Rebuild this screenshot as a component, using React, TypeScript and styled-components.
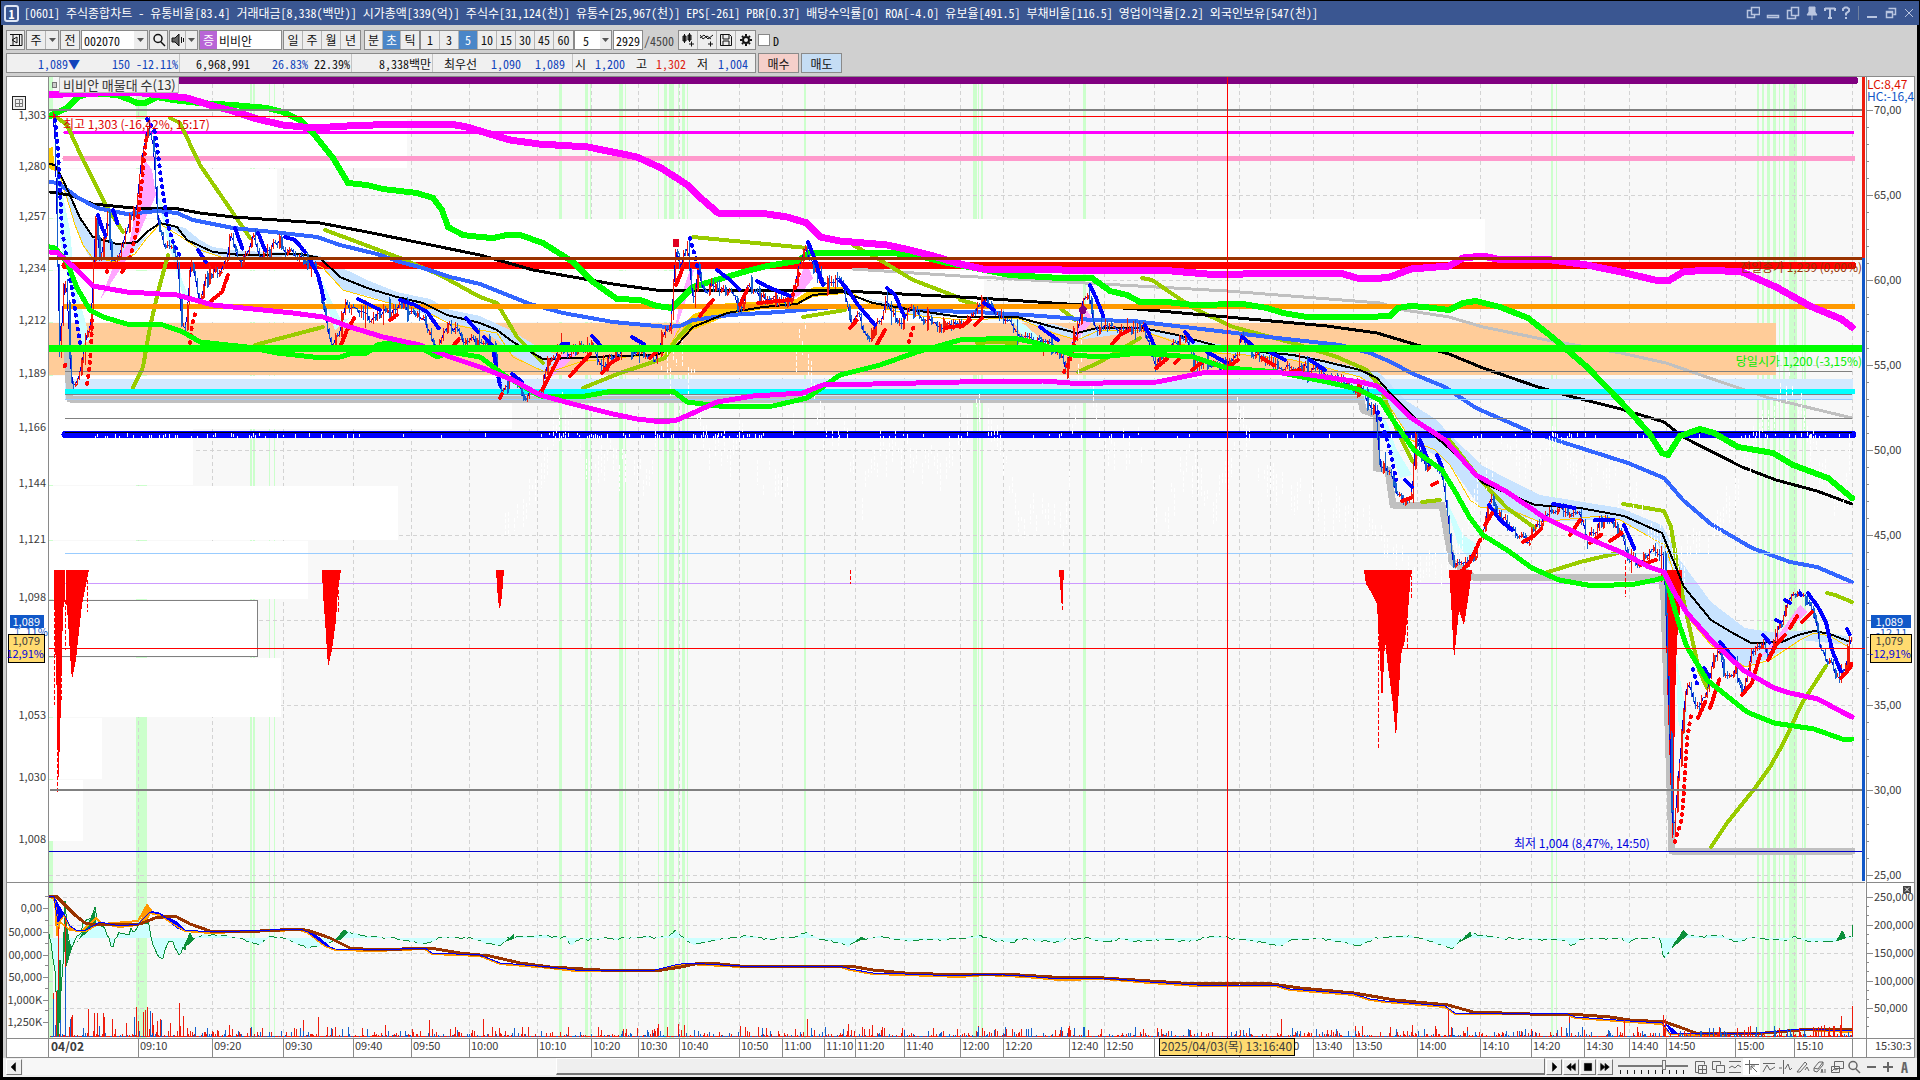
import React from 'react';
import styled, { createGlobalStyle } from 'styled-components';

const UI_FONT = '"Noto Sans Mono CJK KR", "Noto Sans CJK KR", "Liberation Mono", monospace';
const CHART_FONT = '"Noto Sans CJK KR", sans-serif';

const Global = createGlobalStyle`
  * { box-sizing: border-box; }
  html, body { margin: 0; padding: 0; }
  body { background: #000; font-family: ${UI_FONT}; font-size: 12px; color: #111; }
  button, input, select { font: inherit; color: inherit; margin: 0; border-radius: 0; }
`;

/* ---------- window frame ---------- */

const Window = styled.div`
  display: flex;
  flex-direction: column;
  height: 100vh;
  min-height: 600px;
  padding: 1px 1px 3px;
  background: #000;
  overflow: hidden;
`;
const TitleBar = styled.header`
  display: flex;
  align-items: center;
  height: 24px;
  flex: none;
  padding: 0 2px 0 3px;
  gap: 5px;
  background: #3a5691;
  color: #fff;
`;
const TitleBadge = styled.span`
  width: 15px;
  height: 17px;
  border: 2px solid #dfe6f5;
  border-radius: 3px;
  line-height: 13px;
  text-align: center;
  font-weight: bold;
`;
const Title = styled.h1`
  flex: 1;
  min-width: 0;
  margin: 0;
  font-size: 12px;
  font-weight: 400;
  line-height: 22px;
  white-space: pre;
  overflow: hidden;
`;
const TitleTools = styled.div`
  display: flex;
  align-items: center;
`;
const TitleButton = styled.button<{ $w?: number }>`
  width: ${(p) => p.$w ?? 19}px;
  height: 20px;
  padding: 0;
  border: 0;
  background: none;
  color: #b9c5e0;
  display: flex;
  align-items: center;
  justify-content: center;
`;
const TitleRule = styled.span`
  width: 1px;
  height: 14px;
  margin: 0 3px 0 4px;
  background: #71829f;
`;
const Body = styled.main`
  flex: 1;
  min-height: 0;
  display: flex;
  flex-direction: column;
  margin: 0 2px;
  background: #d0d0d0;
`;

/* ---------- toolbars ---------- */

const Toolbar = styled.div`
  display: flex;
  align-items: center;
  flex: none;
  height: 28px;
  padding: 5px 3px 3px;
`;
const Group = styled.div<{ $gap?: number }>`
  display: flex;
  height: 20px;
  margin-right: ${(p) => p.$gap ?? 1}px;
  border: 1px solid #8a8a8a;
  background: #ededed;
`;
const Tool = styled.button<{ $on?: boolean; $w?: number }>`
  width: ${(p) => p.$w ?? 19}px;
  height: 18px;
  padding: 0;
  border: 0;
  border-right: 1px solid #b4b4b4;
  background: ${(p) => (p.$on ? '#4a86c8' : '#ededed')};
  color: ${(p) => (p.$on ? '#fff' : '#111')};
  display: flex;
  align-items: center;
  justify-content: center;
  line-height: 18px;
  &:last-child { border-right: 0; }
`;
const Field = styled.input<{ $w: number }>`
  width: ${(p) => p.$w}px;
  height: 18px;
  padding: 0 2px;
  border: 0;
  background: #fff;
  outline: none;
`;
const Pick = styled.select<{ $w: number }>`
  width: ${(p) => p.$w}px;
  height: 18px;
  padding: 0 0 0 8px;
  border: 0;
  background: #fff;
  appearance: none;
  outline: none;
`;
const Badge = styled.span`
  width: 17px;
  height: 18px;
  line-height: 17px;
  text-align: center;
  color: #fff;
  background: #b865d6;
`;
const Total = styled.span`
  width: 34px;
  color: #444;
`;
const Check = styled.label`
  display: flex;
  align-items: center;
  gap: 3px;
  margin-left: 1px;
  input {
    appearance: none;
    width: 12px;
    height: 12px;
    border: 1px solid #888;
    background: #fff;
  }
`;

const Quotes = styled.div`
  display: flex;
  flex: none;
  height: 23px;
  padding: 0 3px 3px;
  gap: 2px;
`;
const QuoteBox = styled.div`
  display: flex;
  width: 750px;
  border: 1px solid #8a8a8a;
  background: #f0f0f0;
`;
const Cell = styled.div<{ $w: number }>`
  display: flex;
  align-items: center;
  justify-content: flex-end;
  width: ${(p) => p.$w}px;
  padding: 0 1px;
  border-right: 1px solid #c4c4c4;
  white-space: pre;
  &:last-child { border-right: 0; }
`;
const Value = styled.span<{ $c?: string; $w?: number }>`
  width: ${(p) => (p.$w ? p.$w + 'px' : 'auto')};
  text-align: right;
  color: ${(p) => p.$c ?? '#111'};
`;
const Order = styled.button<{ $bg: string }>`
  width: 41px;
  height: 20px;
  padding: 0;
  border: 1px solid #8a8a8a;
  background: ${(p) => p.$bg};
`;

/* ---------- chart ---------- */

const ChartPanel = styled.section`
  flex: 1;
  min-height: 0;
  display: grid;
  grid-template-columns: 42px minmax(0, 1fr) 49px;
  grid-template-rows: minmax(0, 1fr) 19px;
  margin: 0 2px 0 3px;
  border: 1px solid #8a8a8a;
  background: #fff;
  position: relative;
`;
const Canvas = styled.svg`
  display: block;
  width: 100%;
  height: 100%;
  overflow: hidden;
  font-family: ${CHART_FONT};
  font-size: 12px;
`;
const AxisCanvas = styled(Canvas)`
  font-size: 11px;
`;
const PlotCell = styled.div`
  position: relative;
  min-width: 0;
  min-height: 0;
`;
const Legend = styled.div`
  position: absolute;
  top: 0;
  left: 3px;
  display: flex;
  align-items: center;
  gap: 2px;
  i {
    width: 5px;
    height: 6px;
    border: 1px solid #777;
    background: #ccc;
  }
  span {
    padding: 0 2px 0 3px;
    border: 1px solid #bbb;
    background: #f0f0f0;
    color: #333;
    line-height: 14px;
    white-space: pre;
    font-family: ${CHART_FONT};
    font-size: 13px;
  }
`;
const TimeAxis = styled.div`
  grid-column: 1 / -1;
  min-width: 0;
`;

/* ---------- bottom bar ---------- */

const Bottom = styled.footer`
  flex: none;
  display: flex;
  align-items: center;
  height: 19px;
  padding: 0 4px 2px 3px;
  background: #efefef;
`;
const Step = styled.button`
  width: 16px;
  height: 16px;
  margin-right: 1px;
  padding: 0;
  border: 1px solid #fff;
  border-right-color: #777;
  border-bottom-color: #777;
  background: #efefef;
  display: flex;
  align-items: center;
  justify-content: center;
`;
const Track = styled.div`
  flex: 1;
  display: flex;
  justify-content: flex-end;
  height: 17px;
  margin-right: 1px;
  background: #f7f7f7;
`;
const Thumb = styled.div`
  width: 65%;
  border: 1px solid #fff;
  border-right-color: #777;
  border-bottom: 2px solid #777;
  background: #efefef;
`;
const Zoom = styled.label`
  display: flex;
  flex-direction: column;
  width: 70px;
  margin: 0 4px;
  input {
    appearance: none;
    width: 70px;
    height: 10px;
    background: linear-gradient(#777, #777) 0 5px / 100% 2px no-repeat;
  }
  input::-webkit-slider-thumb {
    appearance: none;
    width: 4px;
    height: 10px;
    border: 1px solid #777;
    background: #efefef;
  }
`;
const Draw = styled.button<{ $on?: boolean }>`
  width: 17px;
  height: 17px;
  padding: 0;
  border: 0;
  background: ${(p) => (p.$on ? '#fff' : 'none')};
  color: #666;
  display: flex;
  align-items: center;
  justify-content: center;
  b { font-size: 14px; line-height: 16px; }
`;

/* ---------- data ---------- */

type Pt = [number, number];
const parse = (s: string): Pt[] =>
  s.trim().split(/\s+/).map((p) => p.split(',').map(Number) as unknown as Pt);

const rng = (seed: number) => () => {
  seed = (seed * 1664525 + 1013904223) % 4294967296;
  return seed / 4294967296;
};
const sample = (pts: Pt[], x: number) => {
  for (let i = 1; i < pts.length; i++) {
    if (x <= pts[i][0]) {
      const [x0, y0] = pts[i - 1];
      const [x1, y1] = pts[i];
      return y0 + ((y1 - y0) * (x - x0)) / Math.max(1, x1 - x0);
    }
  }
  return pts[pts.length - 1][1];
};

const UPPER_MAGENTA = '49,94 63,94 133,92 160,95 187,98 213,106 233,111 257,119 283,125 313,128 347,126 400,124 450,124 467,127 480,131 510,140 539,144 588,147 637,157 661,168 686,184 703,200 718,213 760,213 787,217 807,223 820,237 840,241 887,245 910,250 937,257 960,264 983,269 1040,269 1083,271 1110,270 1160,270 1207,274 1243,274 1280,273 1340,273 1357,278 1373,279 1390,277 1411,269 1449,266 1463,258 1483,256 1497,259 1518,259 1552,260 1587,265 1621,272 1655,280 1668,281 1683,272 1707,270 1742,272 1776,287 1810,306 1841,319 1852,327';
const UPPER_GREEN = '50,116 67,108 78,97 90,93 117,95 128,99 137,103 145,103 157,97 173,100 200,103 233,105 267,108 283,112 300,120 313,133 333,158 348,183 367,185 383,189 417,193 433,198 442,210 448,227 463,235 480,237 493,238 507,235 520,235 543,243 573,262 593,282 617,299 640,300 657,306 672,308 680,300 693,287 713,281 747,271 767,266 797,261 810,253 893,253 920,256 947,263 980,269 1010,275 1060,278 1092,278 1110,291 1127,295 1140,302 1167,302 1193,305 1243,304 1267,308 1283,313 1307,317 1367,317 1390,316 1398,308 1410,306 1425,307 1449,310 1463,303 1476,301 1500,307 1528,318 1552,337 1587,367 1621,402 1649,433 1662,453 1668,455 1680,436 1700,429 1714,433 1738,447 1773,453 1793,465 1828,478 1852,498';
const LONG_BLACK = '50,192 70,195 93,204 133,208 173,208 200,213 233,217 320,223 367,232 480,255 533,270 613,284 663,291 730,290 843,291 960,297 993,299 1067,304 1137,309 1227,317 1327,326 1377,333 1417,345 1449,354 1483,368 1538,387 1573,397 1621,409 1664,422 1683,437 1742,467 1776,480 1817,491 1852,504';
const MID_BLUE = '50,182 58,183 77,197 97,208 127,214 157,211 177,213 193,220 233,228 273,232 317,237 340,245 377,254 400,262 423,268 450,277 480,284 530,304 563,313 613,322 667,327 680,326 693,320 730,315 780,312 833,307 893,307 960,312 977,312 1027,315 1093,320 1133,321 1193,328 1260,336 1340,345 1370,353 1393,363 1411,373 1445,387 1476,408 1531,432 1587,450 1628,463 1664,478 1683,500 1711,524 1752,548 1790,562 1817,567 1852,582';
const SHORT_BLACK = '50,164 55,165 63,180 72,200 80,218 93,237 117,244 137,242 147,232 160,223 177,227 187,240 213,252 240,255 300,254 320,258 340,277 367,288 397,297 423,303 447,315 480,323 497,330 513,342 543,359 580,358 613,356 657,355 677,345 693,327 727,313 763,307 797,304 813,295 843,292 873,303 913,310 960,317 1017,317 1053,327 1077,333 1097,328 1143,328 1177,335 1217,346 1260,352 1293,355 1327,362 1360,370 1377,378 1390,393 1407,410 1430,432 1459,457 1483,483 1511,495 1535,505 1580,508 1624,516 1662,533 1673,560 1684,587 1711,620 1731,632 1751,643 1782,642 1798,635 1814,631 1830,634 1850,642';
const YELLOW = '58,170 66,195 75,225 83,245 92,257 115,262 135,254 147,238 160,224 180,236 200,250 230,260 300,257 323,268 343,290 367,297 400,306 423,310 450,324 480,330 497,333 513,357 547,373 580,362 613,358 665,354 680,328 693,317 727,304 763,303 797,299 813,288 843,287 873,306 913,315 960,320 1017,318 1053,333 1077,340 1100,330 1143,331 1177,343 1217,353 1260,356 1293,360 1327,368 1360,377 1377,388 1393,412 1411,440 1435,450 1450,465 1470,500 1480,507 1511,510 1540,522 1600,516 1620,520 1655,540 1665,545 1673,570 1690,620 1711,645 1745,667 1770,660 1800,640 1814,633 1830,636 1850,648';
const LOWER_MAGENTA = '50,252 57,252 77,270 93,286 127,292 177,295 213,305 243,308 293,313 323,317 350,327 383,337 420,345 450,357 480,367 513,380 540,395 573,404 613,414 637,419 663,422 677,420 693,413 717,402 753,396 803,393 823,385 873,384 960,382 1043,381 1070,383 1103,383 1157,382 1177,378 1207,372 1260,372 1303,374 1360,382 1377,386 1393,400 1410,417 1445,440 1476,475 1507,492 1545,518 1587,538 1621,552 1649,567 1664,572 1674,592 1687,613 1711,640 1743,670 1774,688 1790,693 1818,699 1842,712 1852,717';
const LOWER_GREEN = '50,247 55,248 67,262 77,288 90,310 103,317 127,324 163,325 183,332 200,342 247,347 277,353 313,357 340,357 353,353 367,353 377,345 387,343 420,347 437,357 450,352 480,357 507,377 540,396 580,397 613,391 673,391 687,402 727,407 773,406 807,398 840,375 880,365 917,352 960,340 1013,338 1037,343 1073,355 1100,357 1140,353 1193,357 1227,368 1277,372 1327,382 1357,389 1380,400 1393,420 1414,450 1442,470 1456,493 1470,518 1483,535 1507,550 1532,568 1559,580 1593,586 1635,584 1655,580 1666,577 1672,600 1680,627 1687,647 1707,680 1747,712 1774,723 1814,729 1842,739 1852,739';
const OLIVE = [
  '55,116 67,125 83,160 107,207 123,232', '170,118 180,123 200,165 233,213 250,238',
  '325,230 360,243 400,258 440,275 480,297 497,303 517,337 543,363', '133,388 143,367 150,327 158,292 168,255',
  '255,345 323,327', '583,388 620,373 665,358 676,340 690,325', '693,237 807,248', '803,317 845,310',
  '853,245 880,260 913,280 960,298', '1142,278 1152,280 1193,308 1233,327 1293,343 1337,357 1367,370 1380,387 1400,437 1413,462',
  '1422,502 1440,500', '1078,372 1100,362 1140,338', '1060,308 1075,320', '960,300 975,304', '977,343 993,342 1017,343',
  '1447,437 1483,483 1507,508 1535,528', '1545,573 1580,562 1618,553', '1623,504 1664,511 1671,527 1678,570 1684,603 1699,670 1707,688',
  '1711,847 1727,823 1755,788 1770,767 1784,742 1802,703 1826,666', '1827,593 1835,595 1852,602',
];
const LIGHT_GREY = '853,269 960,276 1227,291 1380,303 1404,310 1449,317 1483,327 1552,341 1621,353 1666,363 1724,383 1769,398 1852,418';
const STOP_GREY = '67,350 70,399 1361,399 1363,410 1376,415 1376,468 1388,470 1393,505 1442,505 1452,562 1473,577 1662,577 1664,600 1672,851 1852,851';

const PRICE = parse('53,117 56,180 58,340 60,365 62,290 66,280 70,385 74,387 80,365 85,340 90,330 92,290 95,215 100,265 107,215 110,260 120,255 130,215 136,210 140,160 148,125 152,135 157,220 162,240 170,250 177,258 181,330 186,325 190,260 198,300 205,280 215,272 225,265 230,235 240,262 253,238 262,258 278,240 290,255 305,262 315,270 322,300 330,343 338,335 345,305 355,310 370,317 390,312 402,305 415,315 425,325 437,345 450,325 465,340 480,345 492,350 502,395 512,375 522,395 540,393 546,365 558,350 570,352 585,345 592,345 600,370 610,360 625,349 655,357 662,335 670,330 675,250 680,265 687,243 690,290 694,310 697,270 703,290 715,285 725,290 740,308 747,285 760,300 790,302 797,270 805,250 812,265 820,283 843,283 850,325 857,315 867,337 880,320 885,300 900,325 912,310 925,322 945,328 960,325 970,315 984,303 1000,315 1015,330 1035,342 1058,350 1065,370 1075,335 1083,300 1087,290 1095,330 1110,325 1125,327 1143,328 1155,365 1170,345 1185,335 1193,365 1210,362 1227,367 1237,355 1240,338 1255,355 1275,365 1290,370 1310,367 1330,378 1345,382 1360,390 1368,405 1376,412 1378,465 1390,470 1396,500 1410,500 1415,440 1425,465 1440,465 1445,500 1452,560 1463,567 1475,555 1485,520 1490,500 1500,515 1510,530 1525,540 1535,530 1545,515 1560,510 1580,515 1587,540 1600,520 1620,530 1627,560 1640,560 1655,550 1663,560 1668,700 1672,848 1678,770 1684,700 1687,680 1695,710 1705,695 1712,660 1718,650 1724,680 1735,670 1742,690 1752,650 1760,640 1768,655 1775,635 1785,610 1795,595 1805,600 1812,610 1820,650 1830,665 1840,678 1848,650 1852,630');

const DOT_BLUE = [
  '55,120 58,150 62,230 72,290 80,343', '98,215 101,225 106,237', '113,210 118,225', '147,119 155,132 162,185 167,220 172,240 180,256',
  '198,250 206,262', '235,228 243,250', '258,233 265,250', '285,237 295,240 305,252', '310,260 318,275 324,300', '358,299 368,304 380,310',
  '400,300 415,305 427,312 440,330', '466,318 478,332', '484,337 492,345 500,385', '512,374 522,382', '562,344 570,344', '592,336 600,345',
  '632,337 645,345', '690,238 696,260 700,278', '717,270 730,280 740,290', '757,281 770,288 790,296', '808,242 815,260 823,285', '840,281 848,290 858,305 875,325',
  '887,288 895,295 905,318', '984,303 994,310', '1040,327 1058,340', '1090,285 1097,300 1104,318', '1145,325 1154,345', '1185,332 1193,342',
  '1207,352 1225,362', '1242,337 1252,345', '1270,352 1285,360', '1310,360 1325,370', '1378,412 1390,450 1396,480', '1405,480 1412,487', '1420,440 1430,465',
  '1437,455 1445,475', '1489,505 1500,520 1512,530', '1553,504 1575,508', '1595,520 1615,520', '1624,525 1635,550', '1693,669 1698,687', '1704,668 1710,678',
  '1720,642 1735,660', '1763,635 1770,643', '1776,620 1780,622', '1785,600 1790,603', '1800,593 1801,595', '1808,593 1818,607 1826,622 1832,650 1841,672', '1847,629 1850,635',
];
const DOT_RED = [
  '65,365 65,371', '92,320 91,350 88,380 86,388', '107,272 108,268', '122,272 127,265', '130,258 137,230 143,170 146,140', '190,343 192,325 196,310', '211,301 222,292 228,275',
  '341,345 347,330 355,317', '390,320 397,315', '447,353 460,338', '500,398 502,394', '542,390 550,375 560,355', '570,376 580,365 590,354', '602,373 612,362 620,358', '650,358 656,352', '676,285 682,270',
  '700,316 706,308 713,300', '740,305 747,290', '758,303 790,300', '793,295 800,270', '850,328 857,320', '877,344 885,330', '909,342 914,325', '945,328 958,326', '960,327 970,320', '975,325 982,318',
  '1064,372 1070,360 1076,335', '1112,344 1120,335 1130,330', '1156,368 1168,358', '1175,363 1180,358', '1192,370 1205,360', '1228,367 1238,360', '1262,358 1275,366', '1290,372 1300,370', '1402,501 1410,498', '1432,485 1438,482',
  '1458,575 1470,562 1480,540', '1485,525 1493,512', '1523,542 1535,535 1542,528', '1570,535 1580,520', '1590,543 1602,534', '1610,541 1622,533', '1640,565 1656,560',
  '1675,842 1682,818', '1682,815 1684,790 1687,740 1691,715', '1698,718 1706,700', '1710,708 1716,690 1720,678', '1742,695 1752,683 1760,655', '1768,660 1776,645 1785,635', '1790,628 1798,615', '1802,622 1812,612', '1841,678 1850,668 1852,662',
];

const BLOCKS: [number, number, number][] = [
  [119, 49, 407], [169, 49, 277], [219, 51, 1485], [271, 51, 984], [376, 53, 512], [429, 56, 193], [486, 54, 398], [541, 58, 308], [658, 59, 281], [718, 61, 102], [780, 61, 83],
];
const STRIPES: [number, number][] = [
  [49, 4], [136, 11], [250, 2], [253, 2], [269, 1], [274, 1], [559, 3], [585, 3], [590, 1], [619, 4], [625, 1], [658, 1], [664, 3], [669, 5], [678, 1], [682, 3], [687, 1], [804, 2],
  [973, 4], [978, 1], [981, 2], [1083, 3], [1551, 2], [1556, 1], [1757, 2], [1762, 2], [1767, 3], [1773, 3], [1779, 1], [1783, 2], [1789, 8], [1802, 1], [1804, 2],
];
const TICKS: [number, string][] = [
  [138, '09:10'], [212, '09:20'], [283, '09:30'], [353, '09:40'], [411, '09:50'], [469, '10:00'], [537, '10:10'], [591, '10:20'], [638, '10:30'], [679, '10:40'], [739, '10:50'], [782, '11:00'],
  [824, '11:10'], [855, '11:20'], [904, '11:40'], [960, '12:00'], [1003, '12:20'], [1069, '12:40'], [1104, '12:50'], [1154, ''], [1197, ''], [1239, ''], [1270, '13:30'], [1313, '13:40'], [1353, '13:50'],
  [1417, '14:00'], [1480, '14:10'], [1531, '14:20'], [1584, '14:30'], [1629, '14:40'], [1666, '14:50'], [1735, '15:00'], [1794, '15:10'], [1852, ''],
];
const LEVELS: [number, string, number, number, number][] = [
  [80, '#800080', 7, 65, 1855], [132, '#ff00ff', 3, 65, 1853], [158, '#ff99cc', 5, 65, 1853], [265, '#ff0000', 7, 65, 1853], [306, '#ff9900', 5, 65, 1853],
];
const SPIKES = [
  '54,570 65,570 65,600 63,610 60,740 58,790 57,700 55,640', '66,570 89,570 86,585 82,605 78,640 76,660 72,680 70,655 68,620 66,600', '322,570 341,570 338,590 336,620 332,650 328,667 325,620 323,595',
  '496,570 504,570 502,595 500,610 498,600', '1059,570 1064,570 1062,610', '1364,570 1411,570 1409,600 1405,640 1401,655 1396,738 1393,705 1388,667 1385,640 1382,704 1380,660 1377,604 1371,592 1366,584',
  '1449,570 1472,570 1468,600 1464,625 1459,610 1457,630 1454,660 1451,600', '1665,570 1682,570 1680,610 1677,640 1675,700 1673,850 1671,800 1667,680',
];

const BROWN = '49,896 56,896 65,905 75,915 85,923 95,925 140,924 155,918 170,916 177,917 190,924 210,931 240,932 300,929 310,931 330,938 350,948 375,950 430,948 460,953 490,956 520,963 550,967 600,970 655,971 681,967 695,964 710,963 740,966 850,966 873,970 905,973 960,975 1003,974 1052,977 1104,978 1150,981 1197,984 1240,983 1272,984 1300,988 1354,993 1395,1000 1448,1005 1473,1012 1530,1014 1570,1014 1610,1017 1630,1020 1665,1022 1685,1029 1698,1034 1765,1033 1800,1030 1830,1029 1852,1030';
const FAST = '49,896 54,897 58,922 64,914 70,926 76,930 86,930 100,922 120,926 138,924 150,912 160,914 172,922 185,930 210,932 300,929 308,932 325,945 335,949 375,950 425,948 432,953 480,955 500,963 550,967 575,970 655,970 675,965 688,963 740,966 840,966 850,969 873,973 905,974 960,976 985,974 1025,976 1060,979 1104,978 1150,982 1197,985 1275,985 1290,989 1354,994 1370,999 1385,1001 1445,1006 1455,1013 1495,1013 1568,1014 1575,1017 1630,1021 1662,1023 1670,1033 1700,1034 1760,1033 1800,1029 1852,1031';
const MOMENTUM = parse('49,936 52,950 55,970 58,1034 61,990 64,955 65,897 68,940 72,948 78,935 86,920 95,910 98,925 106,932 112,950 120,930 126,935 132,930 140,925 147,914 152,942 161,958 168,944 176,945 180,955 188,940 200,935 220,935 240,938 258,945 270,936 290,940 307,948 320,945 335,940 344,930 360,935 395,938 425,944 440,937 470,938 485,943 500,946 508,937 540,936 565,937 570,945 580,939 620,938 656,937 672,935 675,930 682,937 694,945 710,941 722,938 740,938 745,936 770,939 795,937 806,932 820,940 840,942 848,946 858,940 882,936 900,940 960,939 978,935 990,939 1012,942 1020,939 1060,942 1070,938 1090,938 1104,942 1120,939 1140,941 1160,939 1190,941 1215,936 1240,939 1282,946 1290,940 1320,938 1340,942 1360,946 1375,938 1410,936 1425,940 1445,945 1452,950 1462,938 1470,933 1500,938 1540,939 1568,940 1570,947 1580,939 1622,938 1626,943 1635,939 1660,938 1664,960 1670,950 1682,932 1690,936 1720,936 1738,942 1750,937 1770,939 1785,941 1793,936 1810,942 1820,941 1835,942 1840,936 1842,930 1846,938 1852,935');
const VOLUME_PEAKS: [number, number][] = [
  [53, 44], [56, 46], [58, 110], [65, 120], [72, 22], [88, 28], [112, 18], [126, 14], [136, 30], [147, 30], [152, 24], [160, 18], [179, 34], [229, 12], [303, 17], [318, 20], [335, 10], [385, 12], [429, 17], [483, 18], [568, 10],
  [637, 9], [658, 13], [667, 10], [678, 13], [684, 12], [740, 11], [795, 8], [807, 18], [848, 13], [862, 10], [872, 12], [902, 9], [978, 11], [1101, 8], [1190, 7], [1240, 7], [1281, 18], [1355, 11], [1362, 11], [1412, 12], [1448, 27], [1467, 10],
  [1569, 20], [1624, 17], [1663, 22], [1665, 18], [1841, 21], [1852, 31],
];
const WHITE_TRACE = parse('505,520 540,470 560,400 572,410 585,450 610,450 650,470 662,370 680,350 693,360 700,420 712,450 730,440 745,420 760,470 790,480 797,340 805,330 812,370 825,440 845,430 860,500 880,440 905,440 930,460 960,440 984,400 1000,440 1020,510 1050,500 1065,520 1080,340 1090,380 1100,440 1140,440 1160,510 1190,450 1210,500 1230,450 1240,395 1260,470 1290,480 1340,500 1370,520 1400,560 1450,560 1480,480 1495,450 1530,440 1560,440 1600,470 1640,500 1680,550 1710,530 1730,480 1760,420 1790,380 1810,430 1840,500 1852,440');

const buildBars = () => {
  const r = rng(7);
  const red: string[] = [];
  const blue: string[] = [];
  const trace: string[] = [];
  let last = 117;
  for (let x = 53; x <= 1852; x += 2) {
    const y = sample(PRICE, x) + (r() - 0.5) * 12;
    const tail = r() < 0.12 ? 12 : 3;
    const a = Math.round(Math.min(last, y) - r() * tail);
    const b = Math.round(Math.max(last, y) + r() * tail);
    (y < last ? red : blue).push(`M${x},${a}V${b}${r() < 0.4 ? `M${x + 1},${a + 2}V${b - 1}` : ''}`);
    trace.push(`${x},${Math.round((y + last) / 2)}`);
    last = y;
  }
  return { red: red.join(''), blue: blue.join(''), trace: trace.join(' ') };
};
const buildVolume = () => {
  const r = rng(31);
  const red: string[] = [];
  const blue: string[] = [];
  for (let x = 50; x < 1852; x += 1) {
    const busy = x < 190 ? 2.2 : x > 1660 ? 1 : 0.8;
    const h = Math.round(1 + Math.pow(r(), 6) * 12 * busy);
    (r() < 0.62 ? red : blue).push(`M${x},1037v${-h}`);
  }
  VOLUME_PEAKS.forEach(([x, h]) => red.push(`M${x},1037v${-h}`));
  return { red: red.join(''), blue: blue.join('') + 'M53,1037v-38M65,1037v-70M1569,1037v-14M1452,1037v-9' };
};
const buildWhite = () => {
  const r = rng(99);
  const out: string[] = [];
  for (let x = 505; x < 1850; x += 3) {
    if (r() < 0.25) continue;
    const y = sample(WHITE_TRACE, x) + (r() - 0.5) * 30;
    out.push(`M${x},${Math.round(y)}v${Math.round(6 + r() * 26)}`);
  }
  for (let x = 95; x < 1850; x += 2) {
    const near = (x < 300) || (x > 540 && x < 760) || (x > 1740) || (x > 1540 && x < 1580);
    if (r() < (near ? 0.35 : 0.06)) out.push(`M${x},${433 + Math.round(r() * 3)}v${2 + Math.round(r() * 4)}`);
  }
  return out.join('');
};
const buildJag = (from: number, to: number, amp: number) => {
  const r = rng(5 + from);
  const out: string[] = [];
  for (let x = from; x <= to; x += 2) out.push(`${x},${Math.round(sample(MOMENTUM, x) + (r() - 0.5) * amp)}`);
  return out.join(' ');
};
const BARS = buildBars();
const VOLUME = buildVolume();
const WHITE = buildWhite();
const JAG_OPEN = buildJag(49, 189, 8);
const JAG_REST = buildJag(189, 1852, 2);

/* stop markers stay apart where the trail is steep and merge where it is flat */
const markerDash = (d: string) => {
  const pts = parse(d);
  const [x0, y0] = pts[0];
  const [x1, y1] = pts[pts.length - 1];
  return Math.abs(y1 - y0) > 3 * Math.abs(x1 - x0) ? '1 6' : '2 2';
};

const Line = ({ d, c, w = 1, dash, cap = 'round' }: { d: string; c: string; w?: number; dash?: string; cap?: 'round' | 'butt' }) => (
  <polyline points={d} fill="none" stroke={c} strokeWidth={w} strokeDasharray={dash} strokeLinecap={cap} strokeLinejoin="round" />
);
const H = ({ y, c, w = 1, a = 65, b = 1852 }: { y: number; c: string; w?: number; a?: number; b?: number }) => (
  <line x1={a} x2={b} y1={y + (w % 2 ? 0.5 : 0)} y2={y + (w % 2 ? 0.5 : 0)} stroke={c} strokeWidth={w} />
);

const Plot = () => (
  <Canvas viewBox="49 77 1816 961" preserveAspectRatio="none" shapeRendering="crispEdges" role="img" aria-label="비비안 5초 차트">
    <rect x="49" y="77" width="1820" height="962" fill="#f8f8f8" />
    {STRIPES.map(([x, w]) => <rect key={x} x={x} y="77" width={w} height="961" fill="#ccffcc" />)}
    {TICKS.map(([x]) => <line key={x} x1={x + 0.5} x2={x + 0.5} y1="77" y2="1038" stroke="#d3d3d3" strokeDasharray="4 3" />)}
    {[195, 280, 365, 450, 535, 620, 705, 875, 897, 925, 953, 981, 1008].map((y) => (
      <line key={y} x1="49" x2="1852" y1={y + 0.5} y2={y + 0.5} stroke="#d3d3d3" strokeDasharray="4 3" />
    ))}
    {BLOCKS.map(([y, h, x]) => <rect key={y} x="49" y={y} width={x - 49} height={h} fill="#fff" />)}
    <rect x="49" y="323" width="1727" height="52" fill="#ffcc99" />
    <rect x="48.5" y="600.5" width="209" height="56" fill="#fff" stroke="#808080" />
    <rect x="65" y="379" width="1788" height="20" fill="#d3e9ff" />

    <polygon fill="#ffcc00" points="49,148 53,147 54,165 58,172 52,170 49,168" />
    <polygon fill="#c8e3ff" points="60,180 72,202 83,222 93,238 117,244 137,242 147,236 135,252 115,264 92,262 83,245 72,215" />
    <polygon fill="#c8e3ff" points="160,222 185,228 200,240 213,247 240,251 300,253 320,256 330,262 367,280 397,292 430,299 450,310 480,316 510,330 543,350 565,357 543,372 513,355 497,340 480,330 450,322 400,306 367,296 343,290 323,268 300,256 230,258 200,252 180,234" />
    <polygon fill="#c8e3ff" points="865,298 913,308 960,316 1053,324 1077,331 1143,326 1217,344 1293,353 1360,368 1380,373 1405,400 1437,420 1450,435 1483,466 1510,480 1540,495 1620,508 1662,525 1680,560 1711,602 1745,628 1770,632 1814,630 1850,637 1850,645 1800,640 1770,658 1745,667 1711,645 1690,620 1673,570 1655,540 1620,520 1540,521 1480,507 1450,465 1411,440 1393,412 1377,388 1360,377 1293,360 1217,352 1143,331 1077,340 1017,320 913,315" />
    <polygon fill="#ffcc00" points="677,345 685,322 693,314 727,303 763,302 797,299 813,288 843,287 843,294 813,297 797,305 763,309 727,316 693,330" />
    <polygon fill="#ccffff" points="57,130 62,190 70,230 75,285 85,320 90,340 82,345 74,300 66,270 60,240" />
    <polygon fill="#ccffff" points="157,195 163,205 172,235 182,280 190,300 184,300 176,270 166,235" />
    <polygon fill="#ccffff" points="322,280 331,300 341,320 350,318 335,330 328,310" />
    <polygon fill="#ccffff" points="1380,410 1388,425 1396,448 1412,475 1400,478 1390,450" />
    <polygon fill="#ccffff" points="1442,490 1452,512 1463,535 1478,545 1470,560 1458,545" />
    <polygon fill="#ccffff" points="1676,655 1682,690 1688,712 1684,745 1678,720" />
    <polygon fill="#ccffff" points="1012,318 1025,325 1040,338 1055,345 1040,343 1020,333" />
    <polygon fill="#ffa6ff" points="145,160 152,170 156,195 147,215 140,232 125,262 100,300 112,270 130,240" />
    <polygon fill="#ffa6ff" points="690,270 694,270 690,287 676,330 672,345 680,300" />
    <polygon fill="#ffa6ff" points="806,262 813,278 800,295 790,300 799,280" />
    <polygon fill="#ffa6ff" points="1087,310 1093,320 1080,337 1070,345" />
    <polygon fill="#ffa6ff" points="560,355 580,350 560,370 545,382" />
    <polygon fill="#ffa6ff" points="1800,605 1808,612 1790,628 1770,650 1755,662 1775,640" />
    <Line d={STOP_GREY} c="#c0c0c0" w={7} />
    {LEVELS.map(([y, c, w, a, b]) => (
      <line key={y} x1={a} x2={b} y1={y + 0.5} y2={y + 0.5} stroke={c} strokeWidth={w} strokeLinecap="round" />
    ))}
    <Line d={LIGHT_GREY} c="#c0c0c0" w={3} />
    <Line d={YELLOW} c="#ffcc00" />
    {OLIVE.map((d) => <Line key={d} d={d} c="#99cc00" w={4} />)}
    <Line d={LONG_BLACK} c="#000" w={3} />
    <Line d={MID_BLUE} c="#3366ff" w={4} />
    <H y={306} c="#ff9900" w={5} b={1840} />
    <H y={371} c="#808080" />
    <H y={391} c="#00ffff" w={5} b={1855} />
    <H y={394} c="#808080" />
    <H y={399} c="#99ccff" />
    <H y={418} c="#808080" />
    <line x1="65" x2="1853" y1="434.5" y2="434.5" stroke="#0000ff" strokeWidth="7" strokeLinecap="round" />
    <H y={432} c="#000" />
    <H y={553} c="#99ccff" />
    <H y={583} c="#cc99ff" />
    <path d={WHITE} stroke="#fff" strokeDasharray="4 2" />
    <Line d={UPPER_GREEN} c="#00ff00" w={6} />
    <Line d={UPPER_MAGENTA} c="#ff00ff" w={7} />
    {SPIKES.map((d) => <polygon key={d} points={d} fill="#ff0000" />)}
    <path d="M54.5,570V705M57.500,740V794M61.5,600V700M65.5,600V650M74.5,640V665M87.5,580V612M338.5,590V612M1378.5,600V750M1407.5,590V650M1411.5,570V600M1661.5,560V582M1625.5,560V597M1062.5,600V612M850.5,570V584" stroke="#ff0000" strokeDasharray="4 2" />
    <Line d={SHORT_BLACK} c="#000" w={2} />
    <polyline points={BARS.trace} fill="none" stroke="#0000dd" />
    <path d={BARS.blue} stroke="#1560cc" />
    <path d={BARS.red} stroke="#ee1c0c" />
    {DOT_BLUE.map((d) => <Line key={d} d={d} c="#0000ff" w={4} dash={markerDash(d)} />)}
    {DOT_RED.map((d) => <Line key={d} d={d} c="#ff0000" w={4} dash={markerDash(d)} />)}
    <Line d={LOWER_GREEN} c="#00ff00" w={5} />
    <Line d={LOWER_MAGENTA} c="#ff00ff" w={5} />
    <rect x="673" y="239" width="6" height="8" fill="#e00020" />
    <polygon points="1083,304 1087,309 1085,314 1080,314 1079,309" fill="#800080" />

    <H y={258} c="#993300" w={3} a={49} b={1862} />
    <H y={348} c="#00ff00" w={7} a={49} b={1862} />
    <H y={110} c="#808080" w={2} a={49} b={1862} />
    <H y={116} c="#ff0000" a={49} b={1862} />
    <H y={790} c="#808080" w={2} a={50} b={1862} />
    <H y={851} c="#0000cc" a={49} b={1862} />
    <text x="63" y="129" fill="#dd0000">최고 1,303 (-16,42%, 15:17)</text>
    <text x="1862" y="272" fill="#993300" textAnchor="end">전일종가 1,239 (0,00%)</text>
    <text x="1862" y="366" fill="#00ee00" textAnchor="end">당일시가 1,200 (-3,15%)</text>
    <text x="1514" y="848" fill="#0000dd">최저 1,004 (8,47%, 14:50)</text>
    <rect x="1862" y="77" width="3" height="181" fill="#ee1c0c" />
    <rect x="1862" y="258" width="3" height="623" fill="#1158c8" />

    <H y={882} c="#8a8a8a" a={49} b={1868} />
    <polygon points={`49,938 ${JAG_OPEN} ${JAG_REST} 1852,938`} fill="#ccffff" />
    <Line d={JAG_REST} c="#ccffff" cap="butt" />
    <Line d={JAG_OPEN} c="#0c8f3a" cap="butt" />
    <Line d={JAG_REST} c="#0c8f3a" cap="butt" dash="7 5 3 6 10 4" />
    <polygon points="63,935 66,915 68,940 72,948 66,968" fill="#0c8f3a" />
    <polygon points="86,926 95,910 96,925 78,940 74,948" fill="#0c8f3a" />
    <polygon points="140,924 147,913 148,924" fill="#0c8f3a" />
    <polygon points="182,950 190,932 194,940" fill="#0c8f3a" />
    <polygon points="335,940 345,929 348,933 340,940" fill="#0c8f3a" />
    <polygon points="1460,942 1470,931 1472,936" fill="#0c8f3a" />
    <polygon points="1672,948 1683,930 1688,935" fill="#0c8f3a" />
    <polygon points="504,942 514,934 514,939" fill="#0c8f3a" />
    <polygon points="1837,941 1842,930 1846,938" fill="#0c8f3a" />
    <polygon points="854,943 860,937 866,938" fill="#0c8f3a" />
    <path d="M1852.5,925v12" stroke="#0c8f3a" />
    <Line d="55,898 57,935 60,922 70,930 82,931 96,918 102,924 138,921 147,905 153,913" c="#ff9900" w={2} />
    <polygon points="138,925 147,906 152,912 146,922" fill="#ff9900" />
    <polygon points="54,896 65,915 60,922 57,925" fill="#0000ff" />
    <polygon points="150,911 158,912 178,922 186,931 178,929 165,919" fill="#0000ff" />
    <polygon points="303,929 312,931 332,948 325,947" fill="#0000ff" />
    <polygon points="1664,1022 1672,1028 1680,1036 1672,1034" fill="#0000ff" />
    <g transform="translate(0 1)"><Line d={FAST} c="#ff9900" w={2} /></g>
    <Line d={BROWN} c="#993300" w={3} />
    <Line d={FAST} c="#0000ff" w={1} />
    <path d={VOLUME.red} stroke="#ee1c0c" />
    <path d={VOLUME.blue} stroke="#1560cc" />
    <path d="M57.5,990V1036M59.5,960V1020" stroke="#0c8f3a" strokeWidth="2" />

    <H y={648} c="#ff0000" a={49} b={1866} />
    <line x1="1227.5" x2="1227.5" y1="77" y2="1038" stroke="#ff0000" />
  </Canvas>
);

const LEFT_LABELS: [number, string][] = [
  [115, '1,303'], [166, '1,280'], [216, '1,257'], [268, '1,234'], [320, '1,212'], [373, '1,189'], [427, '1,166'], [483, '1,144'], [539, '1,121'], [597, '1,098'], [715, '1,053'], [777, '1,030'], [839, '1,008'],
];
const LEFT_SUB: [number, string][] = [[908, '0,00'], [932, '50,000'], [955, '00,000'], [977, '50,000'], [1000, '1,000K'], [1022, '1,250K']];
const RIGHT_LABELS: [number, string][] = [
  [110, '70,00'], [195, '65,00'], [280, '60,00'], [365, '55,00'], [450, '50,00'], [535, '45,00'], [705, '35,00'], [790, '30,00'], [875, '25,00'],
];
const RIGHT_SUB: [number, string][] = [[897, '250,000'], [925, '200,000'], [953, '150,000'], [981, '100,000'], [1008, '50,000']];

const LeftAxis = () => (
  <AxisCanvas viewBox="7 77 42 961" preserveAspectRatio="none" fill="#3c3c3c">
    <rect x="48" y="77" width="1" height="962" fill="#8a8a8a" />
    <g shapeRendering="crispEdges" stroke="#222" fill="#eee">
      <rect x="12.5" y="96.5" width="13" height="13" />
      <path d="M15,99.5h8M15,103.5h8M15,106.5h8M15.5,99v8M19.5,99v8M22.5,99v8" stroke="#777" />
    </g>
    {LEFT_LABELS.map(([y, t]) => <text key={t} x="46" y={y + 4} textAnchor="end">{t}</text>)}
    {LEFT_SUB.map(([y, t]) => (
      <g key={y}>
        <text x="42" y={y + 4} textAnchor="end">{t}</text>
        <path d={`M43,${y + 0.5}h5M45,${y - 11.5}h3`} stroke="#8a8a8a" />
      </g>
    ))}
    <rect x="7" y="882" width="42" height="1" fill="#8a8a8a" />
    <text x="12" y="636" fill="#1158c8">↑ 11%</text>
    <rect x="10" y="615" width="34" height="13" fill="#1158c8" />
    <text x="40" y="626" fill="#fff" textAnchor="end">1,089</text>
    <rect x="8.5" y="634.5" width="36" height="28" fill="#ffdb70" stroke="#000" />
    <text x="40" y="645" textAnchor="end">1,079</text>
    <text x="44" y="658" fill="#0000dd" textAnchor="end">12,91%</text>
  </AxisCanvas>
);

const RightAxis = () => (
  <AxisCanvas viewBox="1865 77 49 961" preserveAspectRatio="none" fill="#3c3c3c">
    <rect x="1866" y="77" width="1" height="962" fill="#8a8a8a" />
    <g fontSize="12">
      <text x="1867" y="89" fill="#dd1100">LC:8,47</text>
      <text x="1867" y="101" fill="#1158c8">HC:-16,4</text>
    </g>
    {RIGHT_LABELS.map(([y, t]) => <text key={t} x="1874" y={y + 4}>{t}</text>)}
    {[110, 195, 280, 365, 450, 535, 620, 705, 790].map((y) => (
      <path key={y} d={`M1867,${y + 0.5}h6M1867,${y + 17.5}h2M1867,${y + 34.5}h2M1867,${y + 51.5}h2M1867,${y + 68.5}h2`} stroke="#8a8a8a" />
    ))}
    <path d="M1867,875.500h6" stroke="#8a8a8a" />
    <rect x="1866" y="882" width="49" height="1" fill="#8a8a8a" />
    {RIGHT_SUB.map(([y, t]) => (
      <g key={t}>
        <text x="1874" y={y + 4}>{t}</text>
        <path d={`M1867,${y + 0.5}h6M1867,${y + 9.5}h2M1867,${y + 18.5}h2`} stroke="#8a8a8a" />
      </g>
    ))}
    <rect x="1903" y="886" width="8" height="7" fill="#444" />
    <path d="M1905,887.5l4,4m0,-4l-4,4" stroke="#fff" />
    <text x="1876" y="637" fill="#1158c8">-12,11</text>
    <rect x="1871" y="615" width="40" height="13" fill="#1158c8" />
    <text x="1903" y="626" fill="#fff" textAnchor="end">1,089</text>
    <rect x="1870.5" y="634.5" width="41" height="28" fill="#ffdb70" stroke="#000" />
    <text x="1903" y="645" textAnchor="end">1,079</text>
    <text x="1911" y="658" fill="#0000dd" textAnchor="end">-12,91%</text>
  </AxisCanvas>
);

const Times = () => (
  <AxisCanvas viewBox="7 1038 1907 19" preserveAspectRatio="none" fill="#3c3c3c">
    <rect x="7" y="1038" width="1908" height="1" fill="#8a8a8a" />
    <rect x="48" y="1038" width="1" height="19" fill="#8a8a8a" />
    <text x="51" y="1051" fontWeight="bold" fontSize="12">04/02</text>
    {TICKS.map(([x, t]) => (
      <g key={x}>
        <rect x={x} y="1039" width="1" height="18" fill="#8a8a8a" />
        <text x={x + 2} y="1050">{t}</text>
      </g>
    ))}
    <rect x="1866" y="1039" width="1" height="18" fill="#8a8a8a" />
    <text x="1875" y="1050">15:30:3</text>
    <rect x="1159.5" y="1038.5" width="135" height="17" fill="#ffdb70" stroke="#000" />
    <text x="1161" y="1051" fontSize="12">2025/04/03(목) 13:16:40</text>
  </AxisCanvas>
);

/* ---------- icons ---------- */

const Icon = ({ d, size = 14, fill = 'none', w = 1 }: { d: string; size?: number; fill?: string; w?: number }) => (
  <svg width={size} height={size} viewBox="0 0 14 14" fill={fill} stroke="currentColor" strokeWidth={w} aria-hidden="true">
    <path d={d} />
  </svg>
);
const Arrow = () => (
  <svg width="7" height="4" viewBox="0 0 7 4" aria-hidden="true"><path d="M0,0h7L3.5,4z" fill="#555" /></svg>
);

const TITLE_ICONS: [string, string][] = [
  ['분리', 'M5.5,1.5h8v7h-8zM5.5,4.5h-4v7h7v-3'], ['접기', 'M1.5,9.5h11v2h-11z'], ['복제', 'M5.5,1.5h7v8h-7zM5.5,4.5h-4v8h8v-3'],
];
const DRAW_ICONS: [string, string][] = [
  ['새 창', 'M4.5,12.5h-3v-11h9v3M4.5,5.5h8v8h-8zM8.5,6v7M5,9.5h7'], ['겹치기', 'M1.5,1.5h8v3M1.5,1.5v8h3M5.5,5.5h8v7h-8z'], ['전체 보기', 'M1,1.5h12M1,12.5h12M1,8l3,-2l3,2l3,-3l3,2'],
  ['십자선', 'M4.5,0v14M0,4.5h14M6,6l6,6M6,10v-4h4'], ['추세', 'M1,3.5h12M1,12l4,-7l3,5l5,-3'], ['수직선', 'M4.5,0v14M0,8h3M6,9l3,-5l2,6l2,-2'], ['그리기', 'M1,12L9,2l2,2L4,12zM9,10l2,-3l2,4'],
  ['모두 지우기', 'M1,8l5,-6h4l-5,7zM1,8v3l3,1l6,-7v-3M8,13l1,-4l1,4M12,9v4'], ['저장', 'M4.5,1.5h9v7h-9zM1.5,6.5h8v6h-8zM2,11l2,-2l2,1l3,-2'],
];

const App = () => (
  <>
    <Global />
    <Window>
      <TitleBar>
        <TitleBadge>1</TitleBadge>
        <Title>[0601] 주식종합차트 - 유통비율[83.4] 거래대금[8,338(백만)] 시가총액[339(억)] 주식수[31,124(천)] 유통수[25,967(천)] EPS[-261] PBR[0.37] 배당수익률[0] ROA[-4.0] 유보율[491.5] 부채비율[116.5] 영업이익률[2.2] 외국인보유[547(천)]</Title>
        <TitleTools>
          {TITLE_ICONS.map(([n, d]) => <TitleButton key={n} aria-label={n} $w={20}><Icon d={d} w={1.5} /></TitleButton>)}
          <TitleButton aria-label="고정" $w={18}><Icon d="M4,1h6v5l2,3h-10l2,-3zM7,9v5" fill="currentColor" /></TitleButton>
          <TitleButton aria-label="글자" $w={17}><Icon d="M2,2.5h10M7,2v10M5,12h4M2,2v3M12,2v3" w={2} /></TitleButton>
          <TitleButton aria-label="도움말" $w={16}><Icon d="M4,5v-2l2,-1.500h2l2,1.500v2l-3,2.500v2M7,11v2" w={2} /></TitleButton>
          <TitleRule />
          <TitleButton aria-label="최소화"><Icon d="M2,11h10" w={2} /></TitleButton>
          <TitleButton aria-label="복원"><Icon d="M4.500,2.500h7v6h-2M2.500,5.500h6v6h-6zM2,6.500h7" w={1.5} /></TitleButton>
          <TitleButton aria-label="닫기" $w={17}><Icon d="M3,3l8,8M11,3l-8,8" /></TitleButton>
        </TitleTools>
      </TitleBar>

      <Body>
        <Toolbar>
          <Group><Tool aria-label="메뉴" $w={17}><Icon d="M4,1.5h9v11h-9zM1,1.500h3M1,12.500h3M10.500,2v10M8,4v6l-5,-3z" /></Tool></Group>
          <Group><Tool $w={19}>주</Tool><Tool aria-label="주 목록" $w={12}><Arrow /></Tool></Group>
          <Group><Tool $w={18}>전</Tool></Group>
          <Group><Field aria-label="종목코드" $w={52} defaultValue="002070" /><Tool aria-label="종목 목록" $w={13}><Arrow /></Tool></Group>
          <Group><Tool aria-label="종목 찾기" $w={17}><Icon d="M10,5.500a4,4 0 1 1 -8,0a4,4 0 1 1 8,0M9,9l4,4" w={1.5} /></Tool></Group>
          <Group><Tool aria-label="소리" $w={16}><Icon d="M1,5h3l4,-4v12l-4,-4h-3zM10.500,4v6M12.500,5v4" fill="#666" /></Tool><Tool aria-label="소리 목록" $w={11}><Arrow /></Tool></Group>
          <Group><Badge>증</Badge><Field aria-label="종목명" $w={64} defaultValue="비비안" /></Group>
          <Group $gap={3}>{['일', '주', '월', '년'].map((t) => <Tool key={t}>{t}</Tool>)}</Group>
          <Group $gap={0}>{['분', '초', '틱'].map((t) => <Tool key={t} $on={t === '초'} $w={18}>{t}</Tool>)}</Group>
          <Group $gap={0}>{['1', '3', '5', '10', '15', '30', '45', '60'].map((t) => <Tool key={t} $on={t === '5'}>{t}</Tool>)}</Group>
          <Group>
            <Pick aria-label="주기" $w={25} defaultValue="5"><option>5</option><option>10</option></Pick>
            <Tool aria-label="주기 목록" $w={11}><Arrow /></Tool>
          </Group>
          <Group><Field aria-label="봉 개수" $w={28} defaultValue="2929" /></Group>
          <Total>/4500</Total>
          <Group>
            <Tool aria-label="캔들 추가"><Icon d="M2,3h3v5h-3zM3.500,1v9M7,2h3v5h-3zM8.500,0v9M8,11h5M10.500,8.500v5" fill="#555" /></Tool>
            <Tool aria-label="지표 추가"><Icon d="M0,5l4,-3l4,4l5,-4M0,2l3,4l4,-3l4,3M8,11h5M10.500,8.500v5" /></Tool>
            <Tool aria-label="저장"><Icon d="M1.500,1.500h9l2,2v9h-11zM4,2v4h6v-4M4,12v-4h6v4" /></Tool>
            <Tool aria-label="설정"><Icon d="M10,7a3,3 0 1 1 -6,0a3,3 0 1 1 6,0M7,1v2M7,11v2M1,7h2M11,7h2M3,3l1,1M10,10l1,1M11,3l-1,1M4,10l-1,1" w={2} /></Tool>
          </Group>
          <Check><input type="checkbox" />D</Check>
        </Toolbar>

        <Quotes>
          <QuoteBox>
            <Cell $w={173}><Value $c="#1144bb">1,089▼</Value><Value $w={50} $c="#1144bb">150</Value><Value $w={48} $c="#1144bb">-12.11%</Value></Cell>
            <Cell $w={172}><Value>6,968,991</Value><Value $w={58} $c="#1144bb">26.83%</Value><Value $w={42}>22.39%</Value></Cell>
            <Cell $w={81}><Value>8,338백만</Value></Cell>
            <Cell $w={140}><Value>최우선</Value><Value $w={44} $c="#1144bb">1,090</Value><Value $w={50} $c="#1144bb">1,089 </Value></Cell>
            <Cell $w={182}><Value>시</Value><Value $w={39} $c="#1144bb">1,200</Value><Value $w={22}>고</Value><Value $w={39} $c="#dd2211">1,302</Value><Value $w={22}>저</Value><Value $w={46} $c="#1144bb">1,004 </Value></Cell>
          </QuoteBox>
          <Order $bg="#f5cfca">매수</Order>
          <Order $bg="#c5ddf4">매도</Order>
        </Quotes>

        <ChartPanel>
          <LeftAxis />
          <PlotCell>
            <Plot />
            <Legend><i /><span>비비안 매물대 수(13)</span></Legend>
          </PlotCell>
          <RightAxis />
          <TimeAxis><Times /></TimeAxis>
        </ChartPanel>

        <Bottom>
          <Step aria-label="왼쪽"><Icon size={10} d="M9,1v12l-6,-6z" fill="#000" /></Step>
          <Track><Thumb /></Track>
          <Step aria-label="재생"><Icon size={10} d="M5,1v12l6,-6z" fill="#000" /></Step>
          <Step aria-label="뒤로"><Icon size={10} d="M7,2v10l-6,-5zM13,2v10l-6,-5z" fill="#000" /></Step>
          <Step aria-label="정지"><Icon size={10} d="M2,2h10v10h-10z" fill="#000" /></Step>
          <Step aria-label="앞으로"><Icon size={10} d="M1,2v10l6,-5zM7,2v10l6,-5z" fill="#000" /></Step>
          <Zoom>
            <input type="range" aria-label="확대 비율" defaultValue={66} />
            <svg width="70" height="4" viewBox="0 0 70 4" aria-hidden="true"><path d="M2,2h68" stroke="#222" strokeWidth="4" strokeDasharray="1 6" /></svg>
          </Zoom>
          {DRAW_ICONS.map(([n, d], i) => <Draw key={n} aria-label={n} $on={i === 3}><Icon d={d} /></Draw>)}
          <Draw aria-label="돋보기"><Icon d="M10,5.500a4,4 0 1 1 -8,0a4,4 0 1 1 8,0M9,9l4,4" w={1.5} /></Draw>
          <Draw aria-label="축소"><Icon d="M3,7h9" w={2} /></Draw>
          <Draw aria-label="확대"><Icon d="M2,7h10M7,2v10" w={2} /></Draw>
          <Draw><b>A</b></Draw>
        </Bottom>
      </Body>
    </Window>
  </>
);

export default App;
